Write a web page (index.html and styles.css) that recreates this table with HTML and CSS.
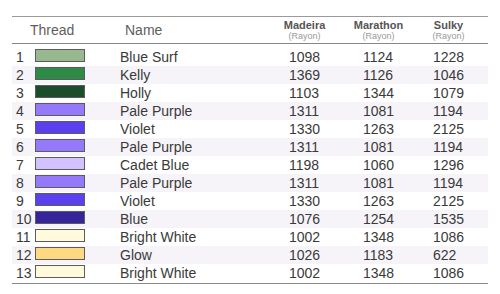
FILE: index.html
```html
<!DOCTYPE html>
<html>
<head>
<meta charset="utf-8">
<link rel="stylesheet" href="styles.css">
</head>
<body>
<div class="wrap">
  <div class="table">
    <div class="head">
      <div class="h-thread">Thread</div>
      <div class="h-name">Name</div>
      <div class="h-num"><div class="hn"><b>Madeira</b><small>(Rayon)</small></div></div>
      <div class="h-num"><div class="hn"><b>Marathon</b><small>(Rayon)</small></div></div>
      <div class="h-num"><div class="hn"><b>Sulky</b><small>(Rayon)</small></div></div>
    </div>
    <div class="body">
      <div class="row"><span class="idx">1</span><span class="sw" style="background:#98b88f"></span><span class="nm">Blue Surf</span><span class="n">1098</span><span class="n">1124</span><span class="n">1228</span></div>
      <div class="row"><span class="idx">2</span><span class="sw" style="background:#2e8a47"></span><span class="nm">Kelly</span><span class="n">1369</span><span class="n">1126</span><span class="n">1046</span></div>
      <div class="row"><span class="idx">3</span><span class="sw" style="background:#1b4c2b"></span><span class="nm">Holly</span><span class="n">1103</span><span class="n">1344</span><span class="n">1079</span></div>
      <div class="row"><span class="idx">4</span><span class="sw" style="background:#9479fb"></span><span class="nm">Pale Purple</span><span class="n">1311</span><span class="n">1081</span><span class="n">1194</span></div>
      <div class="row"><span class="idx">5</span><span class="sw" style="background:#5b41ee"></span><span class="nm">Violet</span><span class="n">1330</span><span class="n">1263</span><span class="n">2125</span></div>
      <div class="row"><span class="idx">6</span><span class="sw" style="background:#9479fb"></span><span class="nm">Pale Purple</span><span class="n">1311</span><span class="n">1081</span><span class="n">1194</span></div>
      <div class="row"><span class="idx">7</span><span class="sw" style="background:#d3c2ff"></span><span class="nm">Cadet Blue</span><span class="n">1198</span><span class="n">1060</span><span class="n">1296</span></div>
      <div class="row"><span class="idx">8</span><span class="sw" style="background:#9479fb"></span><span class="nm">Pale Purple</span><span class="n">1311</span><span class="n">1081</span><span class="n">1194</span></div>
      <div class="row"><span class="idx">9</span><span class="sw" style="background:#5b41ee"></span><span class="nm">Violet</span><span class="n">1330</span><span class="n">1263</span><span class="n">2125</span></div>
      <div class="row"><span class="idx">10</span><span class="sw" style="background:#36259a"></span><span class="nm">Blue</span><span class="n">1076</span><span class="n">1254</span><span class="n">1535</span></div>
      <div class="row"><span class="idx">11</span><span class="sw" style="background:#fffadb"></span><span class="nm">Bright White</span><span class="n">1002</span><span class="n">1348</span><span class="n">1086</span></div>
      <div class="row"><span class="idx">12</span><span class="sw" style="background:#ffd982"></span><span class="nm">Glow</span><span class="n">1026</span><span class="n">1183</span><span class="n">622</span></div>
      <div class="row"><span class="idx">13</span><span class="sw" style="background:#fffadb"></span><span class="nm">Bright White</span><span class="n">1002</span><span class="n">1348</span><span class="n">1086</span></div>
    </div>
  </div>
</div>
</body>
</html>
```

FILE: styles.css
```css
html, body {
  margin: 0;
  padding: 0;
  background: #ffffff;
}
body {
  font-family: "Liberation Sans", Arial, sans-serif;
  color: #3a3a3a;
}
.wrap {
  padding: 16px 12px 0 12px;
}
.table {
  width: 476px;
  border-top: 1px solid #9a9a9a;
  border-bottom: 1px solid #8a8a8a;
}
.head,
.row {
  display: grid;
  grid-template-columns: 23px 85px 169px 74px 70px 1fr;
}
.head {
  height: 26px;
  border-bottom: 1px solid #888888;
  align-items: start;
}
.h-thread {
  grid-column: 1 / span 2;
  padding-left: 18px;
  padding-top: 5px;
  font-size: 14px;
  line-height: 16px;
  color: #5e5e5e;
}
.h-name {
  padding-left: 5px;
  padding-top: 5px;
  font-size: 14px;
  line-height: 16px;
  color: #5e5e5e;
}
.h-num {
  width: 31px;
  display: flex;
  flex-direction: column;
  align-items: center;
  padding-top: 2px;
}
.hn {
  display: flex;
  flex-direction: column;
  align-items: center;
  white-space: nowrap;
}
.hn b {
  font-size: 11px;
  line-height: 12px;
  font-weight: bold;
  color: #555555;
}
.hn small {
  font-size: 9px;
  line-height: 10px;
  color: #9a9a9a;
}
.body {
  padding: 4px 0 1px 0;
}
.row {
  height: 18px;
  font-size: 14px;
  line-height: 18px;
  align-items: start;
}
.row:nth-child(even) {
  background: #f6f4f8;
}
.idx {
  padding-left: 4px;
}
.sw {
  display: block;
  width: 50px;
  height: 13px;
  margin-top: 1px;
  box-sizing: border-box;
  border: 1px solid #5c5c5c;
}
.nm {
  padding-left: 0;
}
.n {
  padding-left: 0;
}
```
